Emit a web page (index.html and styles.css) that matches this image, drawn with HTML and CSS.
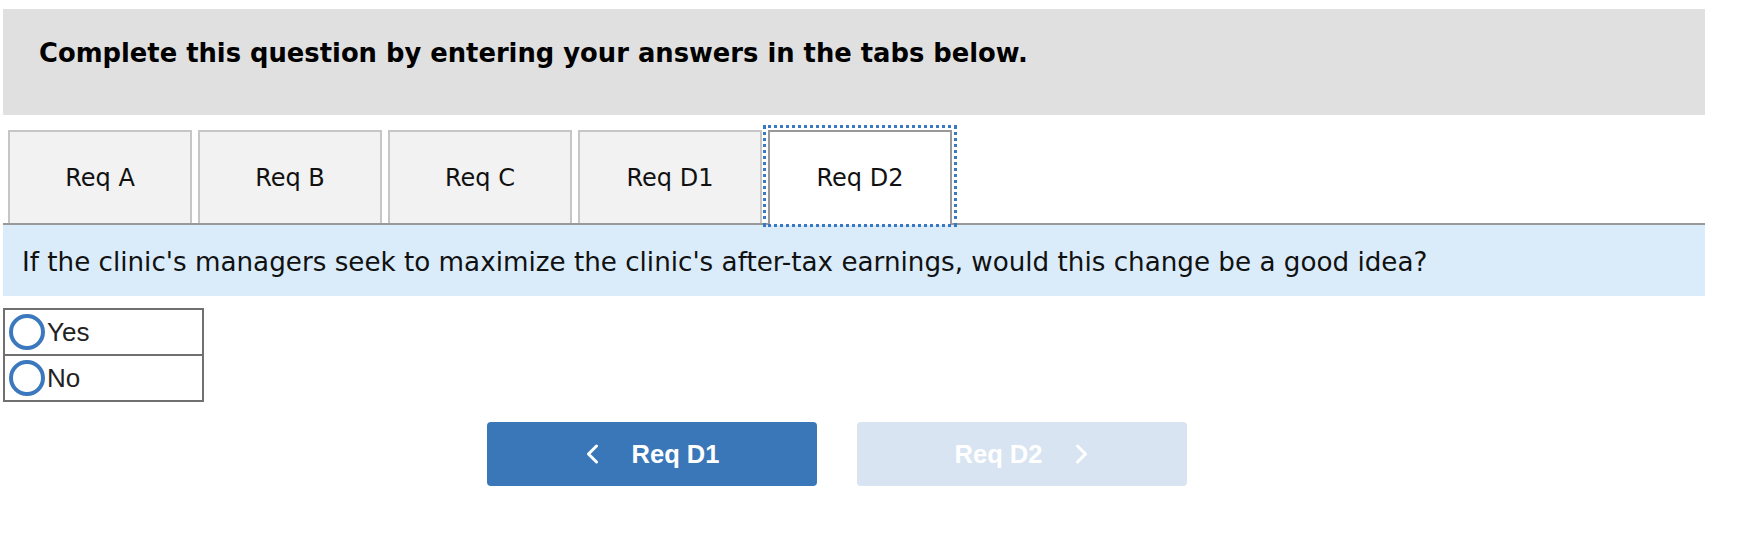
FILE: index.html
```html
<!DOCTYPE html>
<html>
<head>
<meta charset="utf-8">
<link rel="stylesheet" href="styles.css">
</head>
<body>
<div class="page">
  <div class="header">Complete this question by entering your answers in the tabs below.</div>
  <div class="tabs">
    <div class="tab">Req A</div>
    <div class="tab">Req B</div>
    <div class="tab">Req C</div>
    <div class="tab">Req D1</div>
    <div class="tab active">Req D2</div>
  </div>
  <div class="question">If the clinic's managers seek to maximize the clinic's after-tax earnings, would this change be a good idea?</div>
  <div class="choices">
    <div class="choice"><span class="radio"></span><span class="label">Yes</span></div>
    <div class="choice"><span class="radio"></span><span class="label">No</span></div>
  </div>
  <div class="nav">
    <div class="btn prev">
      <svg class="chev" width="14" height="20" viewBox="0 0 14 20"><path d="M11.5 2 L3.5 10 L11.5 18" fill="none" stroke="#fff" stroke-width="3" stroke-linecap="round" stroke-linejoin="round"/></svg>
      <span>Req D1</span>
    </div>
    <div class="btn next disabled">
      <span>Req D2</span>
      <svg class="chev" width="14" height="20" viewBox="0 0 14 20"><path d="M2.5 2 L10.5 10 L2.5 18" fill="none" stroke="#fff" stroke-width="3" stroke-linecap="round" stroke-linejoin="round"/></svg>
    </div>
  </div>
</div>
</body>
</html>
```
FILE: styles.css
```css
html, body {
  margin: 0;
  padding: 0;
  background: #ffffff;
}
.page {
  padding: 9px 0 0 3px;
  width: 1702px;
  font-family: "DejaVu Sans", Verdana, sans-serif;
  color: #000;
}
.header {
  height: 106px;
  box-sizing: border-box;
  background: #e0e0e0;
  padding: 29px 0 0 36px;
  font-size: 25.8px;
  font-weight: bold;
  line-height: 30px;
}
.tabs {
  display: flex;
  align-items: flex-end;
  gap: 6px;
  margin-top: 15px;
  padding-left: 5px;
  border-bottom: 2px solid #999999;
  height: 93px;
}
.tab {
  position: relative;
  width: 184px;
  height: 93px;
  box-sizing: border-box;
  border: 2px solid #c6c6c6;
  border-bottom: none;
  background: #f2f2f2;
  display: flex;
  align-items: center;
  justify-content: center;
  font-size: 24px;
  color: #111;
}
.tab.active {
  height: 95px;
  margin-bottom: -2px;
  background: #ffffff;
  border-color: #999999;
  padding-bottom: 2px;
}
.tab.active::after {
  content: "";
  position: absolute;
  left: -7px;
  right: -7px;
  top: -7px;
  bottom: -2px;
  border: 3px dotted #3a78c2;
}
.question {
  height: 71px;
  box-sizing: border-box;
  background: #daecfa;
  padding: 3px 0 0 19px;
  display: flex;
  align-items: center;
  font-size: 26.2px;
  color: #111;
}
.choices {
  margin-top: 12px;
  width: 201px;
  box-sizing: border-box;
  border: 2px solid #707070;
}
.choice {
  height: 44px;
  display: flex;
  align-items: center;
  padding-left: 4px;
  font-family: "Liberation Sans", Arial, sans-serif;
  font-size: 26px;
  color: #222;
}
.choice + .choice {
  border-top: 2px solid #707070;
}
.radio {
  width: 28px;
  height: 28px;
  border: 4px solid #3b78bd;
  border-radius: 50%;
  margin-right: 2px;
  flex: none;
}
.nav {
  display: flex;
  gap: 40px;
  margin-top: 20px;
  padding-left: 484px;
}
.btn {
  width: 330px;
  height: 64px;
  border-radius: 4px;
  background: #3a77b9;
  display: flex;
  align-items: center;
  justify-content: center;
  gap: 33px;
  font-family: "Liberation Sans", Arial, sans-serif;
  font-weight: bold;
  font-size: 25.5px;
  color: #ffffff;
}
.btn.disabled {
  background: #d8e4f1;
}
.chev {
  display: block;
}
```
